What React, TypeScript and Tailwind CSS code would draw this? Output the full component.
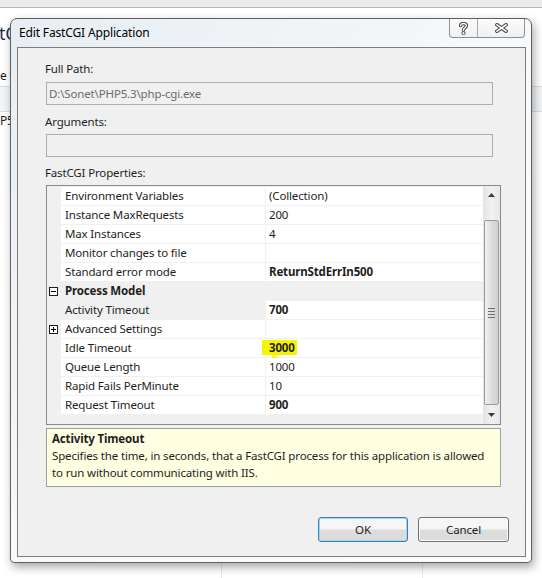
import React from "react";
import clsx from "clsx";

type PropRow = {
  name: string;
  value?: string;
  bold?: boolean;
  kind?: "category" | "expand";
  selected?: boolean;
  marked?: boolean;
};

const rows: PropRow[] = [
  { name: "Environment Variables", value: "(Collection)" },
  { name: "Instance MaxRequests", value: "200" },
  { name: "Max Instances", value: "4" },
  { name: "Monitor changes to file", value: "" },
  { name: "Standard error mode", value: "ReturnStdErrIn500", bold: true },
  { name: "Process Model", kind: "category" },
  { name: "Activity Timeout", value: "700", bold: true, selected: true },
  { name: "Advanced Settings", value: "", kind: "expand" },
  { name: "Idle Timeout", value: "3000", bold: true, marked: true },
  { name: "Queue Length", value: "1000" },
  { name: "Rapid Fails PerMinute", value: "10" },
  { name: "Request Timeout", value: "900", bold: true },
];

function ToggleBox({ open }: { open: boolean }) {
  return (
    <svg width="9" height="9" viewBox="0 0 9 9" className="block">
      <rect x="0.5" y="0.5" width="8" height="8" fill="#fff" stroke="#1e1e1e" />
      <path d="M2 4.5h5" stroke="#000" />
      {!open && <path d="M4.5 2v5" stroke="#000" />}
    </svg>
  );
}

function GridRow({ row }: { row: PropRow }) {
  if (row.kind === "category") {
    return (
      <div className="flex h-[19px] border-b border-[#f0f0f0] bg-[#f0f0f0]">
        <div className="flex w-[14px] items-center pl-[2px]">
          <ToggleBox open />
        </div>
        <span className="pl-1 leading-[18px] font-bold">{row.name}</span>
      </div>
    );
  }

  return (
    <div className="flex h-[19px] border-b border-[#f0f0f0]">
      <div className="flex w-[14px] items-center pl-[2px]">
        {row.kind === "expand" && <ToggleBox open={false} />}
      </div>
      <div
        className={clsx(
          "w-[205px] border-r border-[#f0f0f0] pl-1 leading-[18px] whitespace-nowrap",
          row.selected ? "bg-[#f0f0f0]" : "bg-white"
        )}
      >
        {row.name}
      </div>
      <div className="relative flex-1 bg-white pl-[3px] leading-[18px]">
        {row.marked && (
          <>
            <span className="absolute top-[1px] left-[-4px] h-[15px] w-[35px] bg-[#f5f500]" />
            <span className="absolute top-[16px] left-[6px] h-[8px] w-[5px] bg-[#f5f500]/80" />
          </>
        )}
        <span className={clsx("relative", row.bold && "font-bold")}>{row.value}</span>
      </div>
    </div>
  );
}

function Scrollbar() {
  return (
    <div className="flex w-[17px] flex-col bg-gradient-to-r from-[#e3e3e3] via-[#f1f1f1] to-[#e8e8e8]">
      <div className="flex h-[17px] items-center justify-center">
        <svg width="7" height="4" viewBox="0 0 7 4">
          <path d="M0 4L3.5 0L7 4Z" fill="#3b3b3b" />
        </svg>
      </div>
      <div className="h-[17px]" />
      <div className="mx-px flex h-[185px] items-center justify-center rounded-[2px] border border-[#9a9a9a] bg-gradient-to-r from-[#f1f1f1] via-[#dcdcdc] to-[#cfcfcf]">
        <div className="flex flex-col gap-[2px]">
          <span className="h-px w-[7px] bg-[#6e6e6e]" />
          <span className="h-px w-[7px] bg-[#6e6e6e]" />
          <span className="h-px w-[7px] bg-[#6e6e6e]" />
          <span className="h-px w-[7px] bg-[#6e6e6e]" />
        </div>
      </div>
      <div className="h-px" />
      <div className="flex h-[17px] items-center justify-center">
        <svg width="7" height="4" viewBox="0 0 7 4">
          <path d="M0 0L3.5 4L7 0Z" fill="#3b3b3b" />
        </svg>
      </div>
    </div>
  );
}

function CaptionButtons() {
  return (
    <div className="flex h-[19px] rounded-b-[4px] border border-t-0 border-[#8e8e8e] bg-gradient-to-b from-[#fafbfc] to-[#eef1f4]">
      <div className="flex w-[28px] items-center justify-center border-r border-[#a9a9a9]">
        <svg width="9" height="13" viewBox="0 0 9 13">
          <g fill="none" strokeLinecap="round" strokeLinejoin="round">
            <path d="M1.6 3.6C1.6 0.8 7.4 0.8 7.4 3.6C7.4 5.6 4.5 5.6 4.5 8.2" stroke="#4a4a4a" strokeWidth="3.4" />
            <path d="M1.6 3.6C1.6 0.8 7.4 0.8 7.4 3.6C7.4 5.6 4.5 5.6 4.5 8.2" stroke="#fff" strokeWidth="1.4" />
          </g>
          <circle cx="4.5" cy="11.2" r="1.6" fill="#fff" stroke="#4a4a4a" />
        </svg>
      </div>
      <div className="flex w-[46px] items-center justify-center">
        <svg width="13" height="10" viewBox="0 0 13 10">
          <g strokeLinecap="square">
            <path d="M2 1.8L11 8.2M11 1.8L2 8.2" stroke="#4a4a4a" strokeWidth="3.6" />
            <path d="M2 1.8L11 8.2M11 1.8L2 8.2" stroke="#fff" strokeWidth="1.5" />
          </g>
        </svg>
      </div>
    </div>
  );
}

function FieldLabel({ children, className }: { children: React.ReactNode; className?: string }) {
  return <div className={clsx("ml-[27px] leading-4", className)}>{children}</div>;
}

function WinButton({ label, primary, className }: { label: string; primary?: boolean; className?: string }) {
  return (
    <button
      className={clsx(
        "h-[25px] rounded-[3px] border bg-gradient-to-b from-[#f6f6f6] from-45% to-[#dcdcdc] to-55% text-[#1e1e1e]",
        primary
          ? "border-[#3c7fb1] shadow-[inset_0_0_0_1px_#9fd8f5]"
          : "border-[#707070] shadow-[inset_0_0_0_1px_#fbfbfb]",
        className
      )}
    >
      {label}
    </button>
  );
}

export default function App() {
  return (
    <div className="relative h-[578px] w-[542px] overflow-hidden bg-white font-['Segoe_UI','Noto_Sans',sans-serif] text-[11.5px] tracking-[-0.15px] text-[#1e1e1e]">
      {/* --- Window behind the dialog --- */}
      <div className="flex h-full flex-col">
        <div className="h-[8px] border-b border-[#b7b7b7] bg-[#ececec]" />
        <div className="h-[78px] w-[10px] overflow-hidden pt-[15px] whitespace-nowrap">
          <div className="-ml-[1px] text-[18px] leading-5 text-[#1e3050]">tCGI</div>
          <div className="mt-[25px] text-[12px] leading-4">e t</div>
        </div>
        <div className="h-[26px] border-y border-[#d9dee4] bg-[#f2f4f6]" />
        <div className="flex flex-1">
          <div className="w-[222px] border-r border-[#e4e9f0] pt-[1px] leading-4">
            <div className="w-[10px] overflow-hidden text-[12px]">P5</div>
          </div>
          <div className="w-[201px] border-r border-[#e4e9f0]" />
          <div className="flex-1" />
        </div>
      </div>

      {/* --- Dialog window --- */}
      <div className="absolute top-[18px] left-[10px] flex h-[545px] w-[522px] flex-col rounded-t-[7px] rounded-b-[4px] border border-[#5f5f5f] bg-gradient-to-br from-[#e7edf2] via-[#f7f9fb] to-[#fbfcfd] shadow-[2px_4px_10px_rgba(0,0,0,0.35)]">
        {/* Title bar */}
        <div className="flex h-[28px] items-start pr-[6px] pl-[8px]">
          <span className="pt-[6px] text-[12px] leading-4 text-black">Edit FastCGI Application</span>
          <div className="ml-auto">
            <CaptionButtons />
          </div>
        </div>

        {/* Client area */}
        <div className="mr-[5px] ml-[6px] flex h-[510px] flex-col border border-[#7d7d7d] bg-[#f0f0f0]">
          <FieldLabel className="mt-[13px]">Full Path:</FieldLabel>
          <div className="mt-[5px] ml-[28px] h-[23px] w-[447px] border border-[#adadad] bg-[#f0f0f0] pl-[2px] leading-[21px] text-[#6d6d6d]">
            D:\Sonet\PHP5.3\php-cgi.exe
          </div>

          <FieldLabel className="mt-[9px]">Arguments:</FieldLabel>
          <div className="mt-[4px] ml-[28px] h-[23px] w-[447px] border border-[#adadad] bg-[#f0f0f0]" />

          <FieldLabel className="mt-[8px]">FastCGI Properties:</FieldLabel>
          <div className="mt-[4px] ml-[28px] flex h-[240px] w-[455px] border border-[#8a8a8a] bg-[#f0f0f0]">
            <div className="flex-1 pt-px">
              {rows.map((row) => (
                <GridRow key={row.name} row={row} />
              ))}
            </div>
            <Scrollbar />
          </div>

          <div className="mt-[3px] ml-[28px] h-[59px] w-[455px] border border-[#a0a0a0] bg-[#ffffe1] pt-[1px] pl-[5px] leading-[17px] whitespace-nowrap">
            <div className="font-bold">Activity Timeout</div>
            <div>Specifies the time, in seconds, that a FastCGI process for this application is allowed</div>
            <div>to run without communicating with IIS.</div>
          </div>

          <div className="mt-[30px] flex justify-end gap-[10px] pr-[16px]">
            <WinButton label="OK" primary className="w-[90px]" />
            <WinButton label="Cancel" className="w-[91px]" />
          </div>
        </div>
      </div>
    </div>
  );
}
